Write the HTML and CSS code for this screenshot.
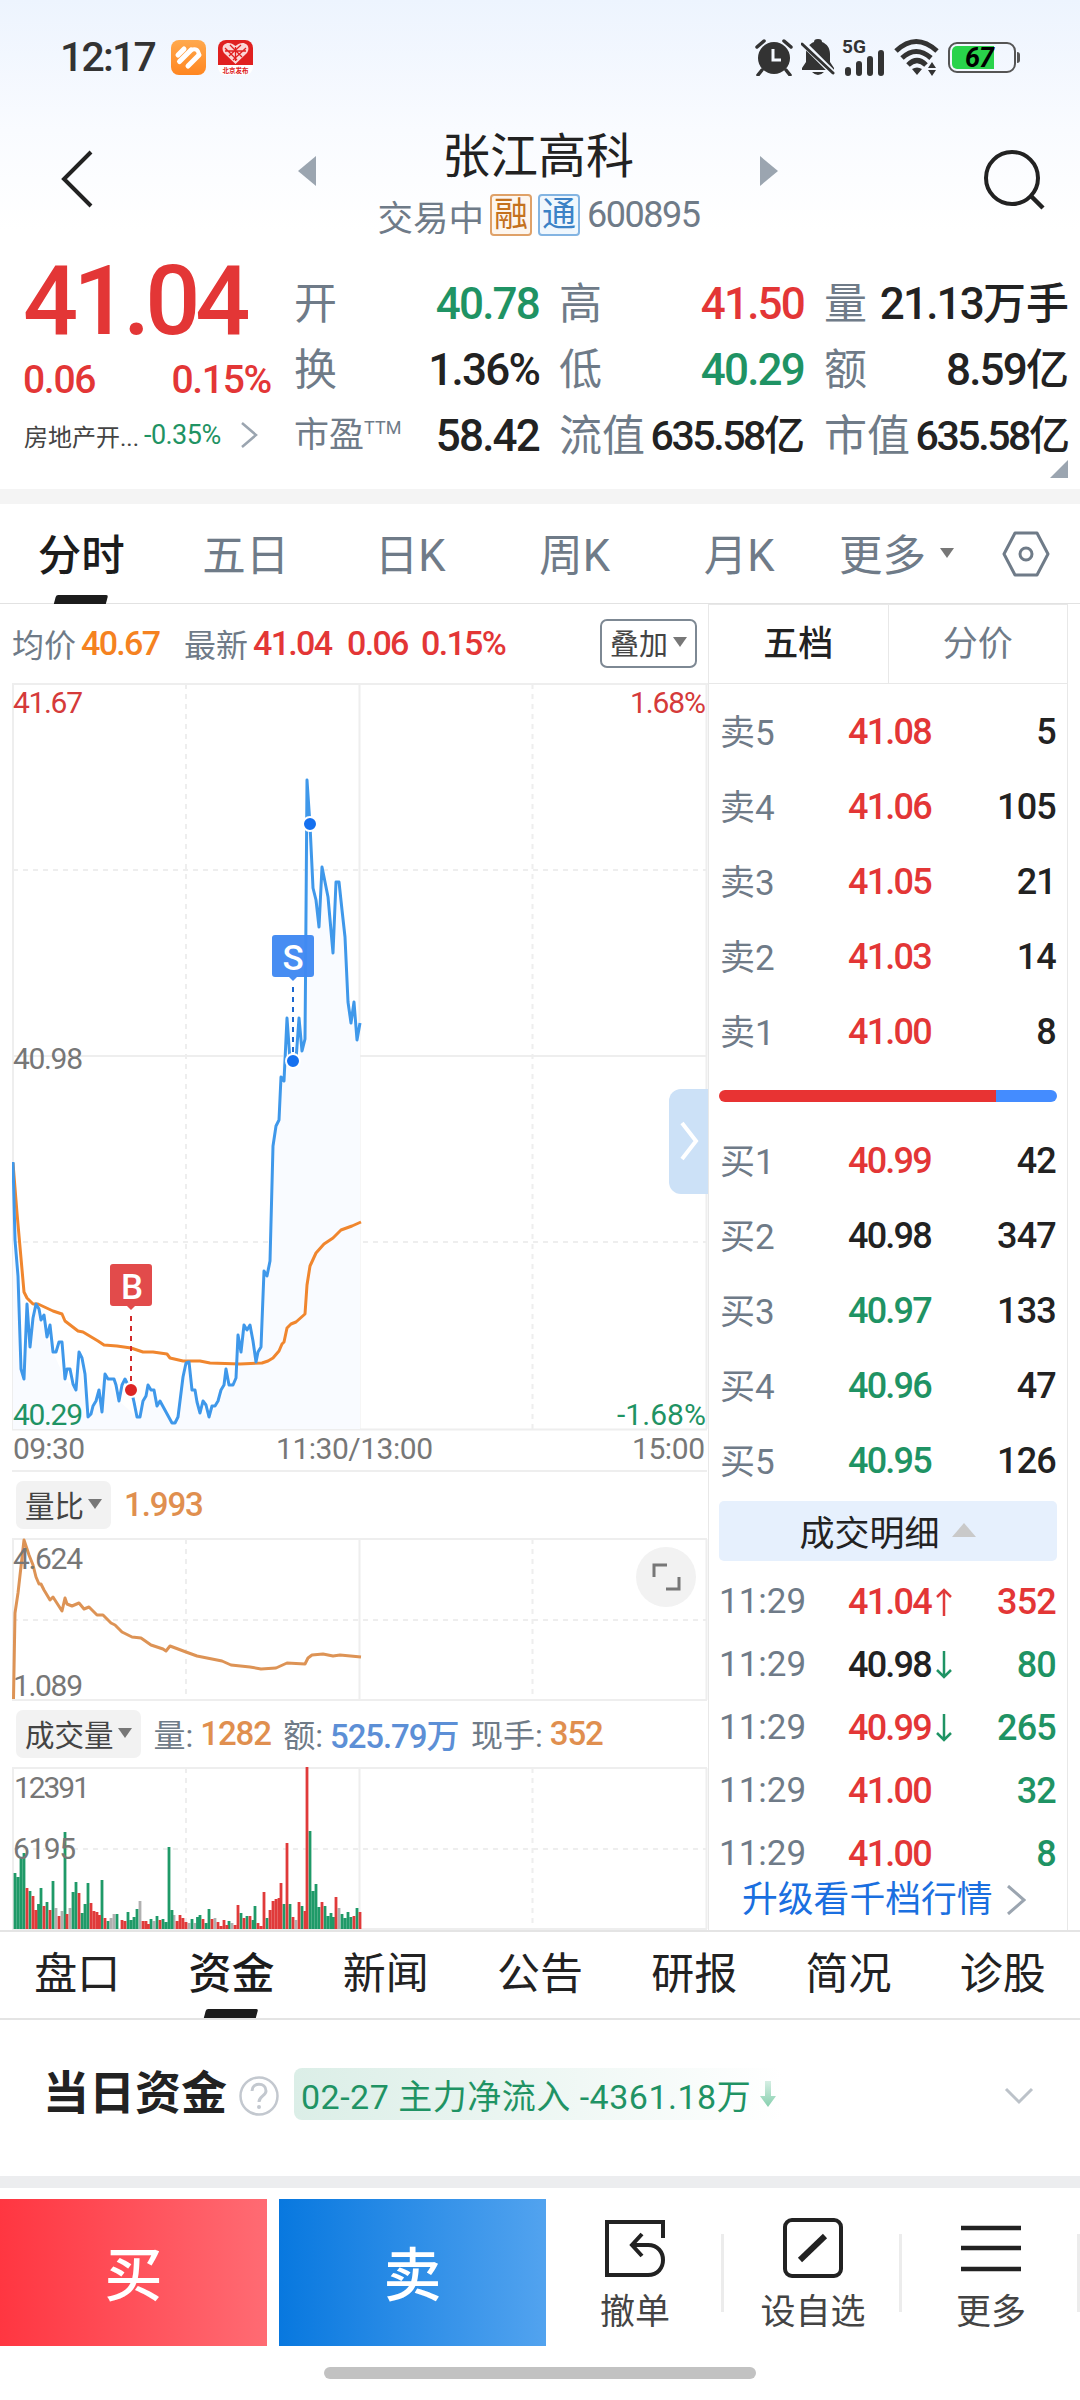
FILE: index.html
```html
<!DOCTYPE html>
<html lang="zh-CN">
<head>
    <meta charset="UTF-8">
    <meta name="viewport" content="width=device-width, initial-scale=1.0">
    <title>张江高科 600895</title>
    <link rel="stylesheet" href="styles.css">
</head>
<body>

<!-- Status bar -->
<div class="status">
    <span class="clock">12:17</span>
    <svg class="app-icon" viewBox="0 0 35 35" width="35" height="35">
        <defs><linearGradient id="og" x1="0" y1="0" x2="0" y2="1"><stop offset="0" stop-color="#ffa94d"/><stop offset="1" stop-color="#ff8620"/></linearGradient></defs>
        <rect width="35" height="35" rx="8" fill="url(#og)"/>
        <path d="M7 15l6-6M8.500 21.500L20 10M17 26L28 15" stroke="#fff" stroke-width="5" stroke-linecap="round"/>
        <path d="M20 10q7-3 8 5" fill="none" stroke="#fff" stroke-width="4"/>
    </svg>
    <svg class="app-icon2" viewBox="0 0 35 35" width="35" height="35">
        <rect width="35" height="35" rx="8" fill="#fff"/>
        <path d="M0 25V8a8 8 0 0 1 8-8h19a8 8 0 0 1 8 8v17z" fill="#e02020"/>
        <path d="M17.500 24L6 13C1 5 10-1 17.500 6 25-1 34 5 29 13z" fill="#fbd6d6"/>
        <path d="M7 8l12 12M12 5l12 12M28 8L15 20M23 5L11 16M17.500 7v14M7 11h21" stroke="#e02020" stroke-width="1.300"/>
        <text x="17.500" y="32.500" font-size="6.500" font-weight="bold" fill="#d22" text-anchor="middle">北京发布</text>
    </svg>
    <div class="status-right">
        <svg width="38" height="38" viewBox="0 0 38 38">
            <circle cx="19" cy="20" r="16" fill="#333"/>
            <path d="M2 9l7-6M36 9l-7-6M7 32l-4 5M31 32l4 5" stroke="#333" stroke-width="3.500" stroke-linecap="round"/>
            <path d="M18 11v11h8" fill="none" stroke="#f5f9ff" stroke-width="3"/>
        </svg>
        <svg width="34" height="38" viewBox="0 0 34 38">
            <path d="M17 1c-3 0-4 1-4 3-5 2-8 6-8 12v8l-4 6v2h32v-2l-4-6v-8c0-6-3-10-8-12 0-2-1-3-4-3zM11 34h12q-6 6-12 0z" fill="#333"/>
            <path d="M1 4l32 32" stroke="#f3f8ff" stroke-width="6"/>
            <path d="M1 6l31 29" stroke="#333" stroke-width="3" stroke-linecap="round"/>
        </svg>
        <svg class="signal" width="44" height="38" viewBox="0 0 44 38">
            <text x="-1" y="15" font-size="19" font-weight="bold" fill="#333">5G</text>
            <path d="M5 32v3M16 26v9M27 21v14M38 15v20" stroke="#333" stroke-width="6" stroke-linecap="round"/>
        </svg>
        <svg class="wifi" width="46" height="38" viewBox="0 0 46 38">
            <g fill="none" stroke="#333" stroke-width="5"><path d="M2 13q20-19 41 0M8 20q14-13 29 0M14 27q9-9 18 0"/></g>
            <path d="M18 31q5-3 10 0l-5 6z M34 30l4-6 4 6zM34 32h8l-4 6z" fill="#333"/>
        </svg>
        <div class="battery"><i></i><b>67</b></div>
    </div>
</div>

<!-- Title bar -->
<div class="header">
    <svg width="34" height="60" viewBox="0 0 34 60"><path d="M31 3L4 30l27 27" fill="none" stroke="#222" stroke-width="4"/></svg>
    <div class="title-block">
        <div class="title-line">
            <svg width="18" height="30" viewBox="0 0 18 30"><path d="M18 0v30L0 15z" fill="#9ba5b0"/></svg>
            <h1>张江高科</h1>
            <svg width="18" height="30" viewBox="0 0 18 30"><path d="M0 0v30l18-15z" fill="#9ba5b0"/></svg>
        </div>
        <div class="subtitle">
            <span>交易中</span><em class="tag orange">融</em><em class="tag blue">通</em><span class="code">600895</span>
        </div>
    </div>
    <svg width="64" height="62" viewBox="0 0 64 62"><circle cx="30" cy="29" r="26" fill="none" stroke="#222" stroke-width="4"/><path d="M48 46l13 13" stroke="#222" stroke-width="4.500"/></svg>
</div>

<!-- Quote summary -->
<div class="quote">
    <div class="price-col">
        <div class="price red">41.04</div>
        <div class="change red"><span>0.06</span><span>0.15%</span></div>
        <div class="sector"><span>房地产开...</span><span class="green num">-0.35%</span>
            <svg width="20" height="26" viewBox="0 0 20 26"><path d="M3 1l14 12L3 25" fill="none" stroke="#9ba5b0" stroke-width="2.500"/></svg>
        </div>
    </div>
    <div class="stats">
        <div class="stat"><label>开</label><b class="green">40.78</b></div>
        <div class="stat"><label>高</label><b class="red">41.50</b></div>
        <div class="stat"><label>量</label><b>21.13<u>万手</u></b></div>
        <div class="stat"><label>换</label><b>1.36%</b></div>
        <div class="stat"><label>低</label><b class="green">40.29</b></div>
        <div class="stat"><label>额</label><b>8.59<u>亿</u></b></div>
        <div class="stat"><label class="small">市盈<sup>TTM</sup></label><b>58.42</b></div>
        <div class="stat"><label>流值</label><b class="long">635.58<u>亿</u></b></div>
        <div class="stat"><label>市值</label><b class="long">635.58<u>亿</u></b></div>
    </div>
    <i class="corner"></i>
</div>

<!-- Period tabs -->
<div class="tabs">
    <span class="active">分时</span>
    <span>五日</span>
    <span>日K</span>
    <span>周K</span>
    <span>月K</span>
    <span class="more">更多<i class="tri"></i></span>
    <svg width="50" height="50" viewBox="0 0 50 50" fill="none" stroke="#6f7b88" stroke-width="3"><path d="M14 4h22l11 21-11 21H14L3 25z" stroke-linejoin="round"/><circle cx="25" cy="25" r="6"/></svg>
</div>

<div class="main">
    <!-- Charts -->
    <div class="charts">
        <div class="chart-head">
            <span>均价</span><b class="amber w1">40.67</b>
            <span>最新</span><b class="red w1">41.04</b><b class="red w2">0.06</b><b class="red w3">0.15%</b>
            <button class="overlay">叠加<i class="tri"></i></button>
        </div>
        <svg class="chart" viewBox="12 683 697 789" width="697" height="789">
            <g class="grid">
                <path d="M12 684H708M13 684V1429M359.500 684V1429M706.500 684V1429M12 1056H707M12 1429.500H707M12 1471H707"/>
                <path class="dash" d="M13 870H707M13 1242H707M186 684V1429M532.500 684V1429"/>
            </g>
            <path class="area" d="M13 1429V1162L15 1240 18 1276 21 1369 24 1379 27 1304 30 1347 33 1318 36 1304 47 1337 53 1352 65 1379 76 1390 79 1352 88 1417 105 1374 119 1401 137 1417 148 1385 172 1423 178 1417 186 1363 200 1413 209 1417 229 1385 236 1378 238 1335 244 1325 256 1362 261 1347 264 1271 270 1261 273 1146 279 1120 281 1077 287 1018 290 1060 299 1018 305 1039 307 779 313 888 319 927 322 867 333 953 339 882 345 937 351 1023 360 1023V1429z"/>
            <polyline class="avg" points="13,1163 17,1213 24,1292 27,1298 33,1304 38,1304 53,1311 62,1314 65,1321 78,1331 83,1332 98,1341 104,1345 117,1346 131,1348 143,1352 153,1352 167,1354 170,1358 183,1361 200,1361 210,1363 240,1364 262,1363 268,1361 273,1358 279,1351 282,1344 284,1342 287,1328 291,1324 296,1322 305,1314 307,1285 310,1266 316,1253 324,1244 333,1238 341,1230 352,1226 361,1222"/>
            <polyline class="line" points="13,1162 15,1240 18,1276 21,1369 24,1379 27,1304 30,1347 33,1318 36,1304 39,1309 41,1320 44,1315 47,1337 50,1325 53,1352 56,1352 59,1342 62,1342 65,1379 67,1369 70,1369 73,1384 76,1390 79,1352 82,1358 85,1374 88,1417 91,1414 93,1406 96,1401 99,1390 102,1412 105,1374 108,1379 114,1379 116,1385 119,1401 122,1385 125,1379 127,1383 131,1389 134,1402 137,1417 140,1417 143,1401 146,1396 148,1385 151,1390 154,1390 157,1406 160,1401 172,1423 175,1423 178,1417 183,1377 186,1363 189,1362 192,1390 195,1390 197,1402 200,1413 203,1401 206,1405 209,1417 212,1406 215,1406 218,1401 221,1390 224,1385 226,1369 229,1385 233,1385 236,1378 238,1335 241,1352 244,1325 247,1330 250,1325 253,1341 256,1362 258,1352 261,1347 264,1271 267,1276 270,1261 273,1146 276,1126 279,1120 281,1077 284,1081 287,1018 290,1060 293,1061 296,1060 299,1018 302,1051 305,1039 305.500,980 307,780 310,825 313,888 316,900 319,927 322,867 328,897 333,953 336,882 339,882 342,910 345,937 348,1002 351,1023 354,1002 357,1040 360,1023"/>
            <path d="M131 1316V1382" stroke="#d22a2a" stroke-width="2" stroke-dasharray="5 5"/>
            <path d="M113 1264h36a3 3 0 0 1 3 3v36a3 3 0 0 1-3 3h-14l-4 4-4-4h-14a3 3 0 0 1-3-3v-36a3 3 0 0 1 3-3z" fill="#e24b4b"/>
            <text x="132" y="1299" class="mark">B</text>
            <circle cx="131" cy="1390" r="7" fill="#dc2525" stroke="#fff" stroke-width="2"/>
            <path d="M293 987V1052" stroke="#1c68cf" stroke-width="2" stroke-dasharray="5 5"/>
            <path d="M275 935h36a3 3 0 0 1 3 3v36a3 3 0 0 1-3 3h-14l-4 4-4-4h-14a3 3 0 0 1-3-3v-36a3 3 0 0 1 3-3z" fill="#4189f2" fill-opacity=".97"/>
            <text x="293" y="970" class="mark">S</text>
            <circle cx="293" cy="1061" r="7" fill="#1570ef" stroke="#fff" stroke-width="2"/>
            <circle cx="310" cy="824" r="7" fill="#1570ef" stroke="#fff" stroke-width="2"/>
            <text class="ax r" x="13" y="713" textLength="70">41.67</text>
            <text class="ax r" x="630" y="713" textLength="76">1.68%</text>
            <text class="ax" x="13" y="1069" textLength="70">40.98</text>
            <text class="ax g" x="13" y="1425" textLength="70">40.29</text>
            <text class="ax g" x="617" y="1425" textLength="89">-1.68%</text>
            <text class="ax" x="13" y="1459" textLength="72">09:30</text>
            <text class="ax" x="276" y="1459" textLength="157">11:30/13:00</text>
            <text class="ax" x="632" y="1459" textLength="73">15:00</text>
            <path d="M708 1089h-27a12 12 0 0 0-12 12v81a12 12 0 0 0 12 12h27z" fill="#cce1f7"/>
            <path d="M682 1123l14 18-14 18" fill="none" stroke="#fff" stroke-width="4"/>
        </svg>
        <div class="sub-head"><span class="pill">量比<i class="tri"></i></span><b class="tan">1.993</b></div>
        <svg class="chart" viewBox="12 1538 697 164" width="697" height="164">
            <g class="grid">
                <path d="M12 1539H707M13 1539V1700M359.500 1539V1700M706.500 1539V1700M12 1700H707"/>
                <path class="dash" d="M13 1620H707M186 1539V1700M532.500 1539V1700"/>
            </g>
            <polyline class="ratio" points="13.500,1699 15,1613 18,1593 24,1540 29,1555 33,1565 36,1577 39,1584 41,1584 44,1590 50,1600 53,1597 62,1611 65,1598 67,1604 72,1606 79,1603 84,1609 89,1607 97,1615 103,1615 111,1623 115,1625 122,1632 132,1637 141,1638 151,1645 163,1649 166,1651 170,1646 186,1652 197,1656 222,1661 231,1665 250,1667 261,1669 276,1668 287,1663 305,1664 308,1658 312,1655 323,1654 333,1656 340,1655 361,1657"/>
            <text class="ax" x="13" y="1569" textLength="70">4.624</text>
            <text class="ax" x="13" y="1696" textLength="70">1.089</text>
            <circle cx="666" cy="1577" r="30" fill="#f2f2f2"/>
            <path d="M654 1577v-12h13M679 1577v12h-13" fill="none" stroke="#777" stroke-width="3"/>
        </svg>
        <div class="sub-head vol-head"><span class="pill">成交量<i class="tri"></i></span>
            <span>量:</span><b class="tan v1">1282</b><span>额:</span><b class="sky v2">525.79<u>万</u></b><span>现手:</span><b class="tan">352</b>
        </div>
        <svg class="chart" viewBox="12 1767 697 163" width="697" height="163">
            <g class="grid">
                <path d="M12 1768H707M13 1768V1929M359.500 1768V1929M706.500 1768V1929M12 1929H707"/>
                <path class="dash" d="M13 1849H707M186 1768V1929M532.500 1768V1929"/>
            </g>
            <g class="bars">
                <path stroke="#b0b0b0" d="M56 1908V1929M62 1911V1929M70 1908V1929M111 1918V1929M114 1914V1929M140 1901V1929M154 1921V1929M174 1915V1929M189 1923V1929M195 1923V1929M215 1918V1929M232 1923V1929M296 1920V1929M339 1908V1929"/>
                <path stroke="#1f9a68" d="M15 1873V1929M18 1877V1929M21 1857V1929M24 1853V1929M30 1891V1929M38.500 1904V1929M41 1888V1929M47 1902V1929M53 1881V1929M65 1832V1929M73 1892V1929M76 1882V1929M82 1913V1929M85 1904V1929M88 1883V1929M102 1880V1929M108 1921V1929M117 1914V1929M128 1912V1929M131 1920V1929M134 1917V1929M137 1909V1929M151 1919V1929M157 1916V1929M163 1919V1929M166 1922V1929M169 1847V1929M172 1910V1929M192 1919V1929M197.500 1917V1929M200 1915V1929M206 1923V1929M209 1909V1929M229 1921V1929M241 1913V1929M247 1916V1929M253 1920V1929M255 1906V1929M267 1918V1929M284 1904V1929M290 1904V1929M302 1906V1929M310 1831V1929M313 1891V1929M316 1884V1929M319 1907V1929M325 1906V1929M328 1916V1929M331 1913V1929M333.500 1917V1929M342 1914V1929M345 1918V1929M348 1912V1929M351 1917V1929M357 1908V1929"/>
                <path stroke="#e03a3a" d="M27 1888V1929M33 1896V1929M36 1910V1929M44 1906V1929M50 1910V1929M59 1916V1929M67 1914V1929M79 1893V1929M91 1903V1929M94 1911V1929M97 1912V1929M99.500 1915V1929M105 1918V1929M122 1920V1929M125 1921V1929M143 1921V1929M146 1921V1929M148.500 1924V1929M160 1920V1929M177 1921V1929M180 1915V1929M183 1918V1929M186 1922V1929M203 1919V1929M212 1919V1929M218 1922V1929M221 1926V1929M224 1920V1929M227 1925V1929M235 1925V1929M238 1905V1929M244 1918V1929M250 1916V1929M258 1923V1929M261 1926V1929M264 1892V1929M270 1910V1929M273 1901V1929M276 1899V1929M279 1898V1929M281 1883V1929M287 1843V1929M293 1917V1929M299 1902V1929M305 1911V1929M307 1767V1929M322 1902V1929M336 1897V1929M354 1916V1929M360 1912V1929"/>
            </g>
            <text class="ax" x="14" y="1798" textLength="76">12391</text>
            <text class="ax" x="13" y="1859" textLength="63">6195</text>
        </svg>
    </div>

    <!-- Order book -->
    <div class="book">
        <div class="book-tabs"><span class="active">五档</span><span>分价</span></div>
        <div class="levels">
            <div class="row"><span>卖5</span><b class="red">41.08</b><b class="v">5</b></div>
            <div class="row"><span>卖4</span><b class="red">41.06</b><b class="v">105</b></div>
            <div class="row"><span>卖3</span><b class="red">41.05</b><b class="v">21</b></div>
            <div class="row"><span>卖2</span><b class="red">41.03</b><b class="v">14</b></div>
            <div class="row"><span>卖1</span><b class="red">41.00</b><b class="v">8</b></div>
        </div>
        <div class="ratio-bar"></div>
        <div class="levels buy">
            <div class="row"><span>买1</span><b class="red">40.99</b><b class="v">42</b></div>
            <div class="row"><span>买2</span><b>40.98</b><b class="v">347</b></div>
            <div class="row"><span>买3</span><b class="green">40.97</b><b class="v">133</b></div>
            <div class="row"><span>买4</span><b class="green">40.96</b><b class="v">47</b></div>
            <div class="row"><span>买5</span><b class="green">40.95</b><b class="v">126</b></div>
        </div>
        <div class="deal-title">成交明细<i></i></div>
        <div class="deals">
            <div class="row"><span>11:29</span><b class="red">41.04<svg width="16" height="28" viewBox="0 0 16 28"><path d="M8 28V2M1 9l7-7 7 7" fill="none" stroke="#e03a3a" stroke-width="2.500"/></svg></b><b class="v red">352</b></div>
            <div class="row"><span>11:29</span><b>40.98<svg width="16" height="28" viewBox="0 0 16 28"><path d="M8 0v26M1 19l7 7 7-7" fill="none" stroke="#1f9364" stroke-width="2.500"/></svg></b><b class="v green">80</b></div>
            <div class="row"><span>11:29</span><b class="red">40.99<svg width="16" height="28" viewBox="0 0 16 28"><path d="M8 0v26M1 19l7 7 7-7" fill="none" stroke="#1f9364" stroke-width="2.500"/></svg></b><b class="v green">265</b></div>
            <div class="row"><span>11:29</span><b class="red">41.00</b><b class="v green">32</b></div>
            <div class="row"><span>11:29</span><b class="red">41.00</b><b class="v green">8</b></div>
        </div>
        <div class="upgrade">升级看千档行情<svg width="20" height="30" viewBox="0 0 20 30"><path d="M2 1l16 14L2 29" fill="none" stroke="#9ba5b0" stroke-width="3"/></svg></div>
    </div>
</div>

<!-- Info tabs -->
<div class="info-tabs">
    <span>盘口</span>
    <span class="active">资金</span>
    <span>新闻</span>
    <span>公告</span>
    <span>研报</span>
    <span>简况</span>
    <span>诊股</span>
</div>

<div class="funds">
    <h2>当日资金</h2>
    <svg class="help" width="42" height="42" viewBox="0 0 42 42" fill="none" stroke="#c3c8cf" stroke-width="2.500"><circle cx="21" cy="21" r="18.500"/><path d="M14 16c0-9 14-9 14 0 0 5-7 5-7 11" stroke-width="3"/><circle cx="21" cy="32" r="1" stroke-width="2"/></svg>
    <div class="flow">02-27 主力净流入 -4361.18万<svg width="16" height="26" viewBox="0 0 16 26"><defs><linearGradient id="gg" x1="0" y1="0" x2="0" y2="1"><stop offset="0" stop-color="#d5eee3"/><stop offset="1" stop-color="#86cfae"/></linearGradient></defs><path d="M5 0h6v15h5l-8 11-8-11h5z" fill="url(#gg)"/></svg></div>
    <svg class="down" width="30" height="18" viewBox="0 0 30 18"><path d="M2 2l13 13L28 2" fill="none" stroke="#bcc2c9" stroke-width="3"/></svg>
</div>

<!-- Trade bar -->
<div class="actions">
    <button class="buy-btn">买</button>
    <button class="sell-btn">卖</button>
    <div class="action">
        <svg width="62" height="62" viewBox="0 0 62 62" fill="none" stroke="#222" stroke-width="4"><path d="M59 21V5H3v53h41c20 0 20-30 0-30H29M38 17L28 28l10 11"/></svg>
        <span>撤单</span>
    </div>
    <div class="action">
        <svg width="62" height="62" viewBox="0 0 62 62" fill="none" stroke="#222"><rect x="3" y="3" width="56" height="56" rx="7" stroke-width="4"/><path d="M18 43L43 19" stroke-width="6"/></svg>
        <span>设自选</span>
    </div>
    <div class="action">
        <svg width="62" height="62" viewBox="0 0 62 62" stroke="#222" stroke-width="4.500"><path d="M1 11h60M1 31h60M1 52h60"/></svg>
        <span>更多</span>
    </div>
</div>
<div class="home-bar"></div>

</body>
</html>
```
FILE: styles.css
```css
* {
    box-sizing: border-box;
}
body {
    margin: 0;
    width: 1080px;
    height: 2400px;
    overflow: hidden;
    font-family: Roboto, "Noto Sans CJK SC", sans-serif;
    color: #222;
    background: linear-gradient(#edf4fe 0, #f9fbff 130px, #fff 230px);
}
svg {
    display: block;
    flex: none;
}
h1, h2 {
    margin: 0;
}
b {
    font-weight: 500;
    letter-spacing: -0.04em;
}
u {
    text-decoration: none;
    letter-spacing: 0;
}
button {
    font-family: inherit;
    padding: 0;
    border: none;
}
.red { color: #e33636; }
.green { color: #1f9364; }
.amber { color: #f58220; }
.tan { color: #e08f4f; }
.sky { color: #5c8fd6; }
.num { letter-spacing: -0.02em; }
.tri {
    border: 7px solid transparent;
    border-top: 10px solid #777;
    border-bottom: 0;
}

/* Status bar */
.status {
    display: flex;
    align-items: center;
    height: 114px;
    padding-left: 60px;
}
.clock {
    width: 111px;
    font-size: 41px;
    font-weight: 500;
    letter-spacing: -1.8px;
    color: #333;
}
.app-icon {
    margin-right: 12px;
}
.status-right {
    display: flex;
    align-items: center;
    margin-left: auto;
    margin-right: 64px;
}
.status-right svg {
    margin-right: 8px;
}
.status-right .signal {
    margin-right: 7px;
    overflow: visible;
}
.battery {
    position: relative;
    width: 68px;
    height: 31px;
    border: 2px solid #555;
    border-radius: 9px;
    padding: 2px;
}
.battery::after {
    content: "";
    position: absolute;
    right: -6px;
    top: 8px;
    width: 3px;
    height: 11px;
    background: #555;
    border-radius: 0 3px 3px 0;
}
.battery i {
    display: block;
    width: 42px;
    height: 23px;
    background: #29d34b;
    border-radius: 5px 0 0 5px;
}
.battery b {
    position: absolute;
    left: 15px;
    top: 0;
    font-size: 27px;
    font-weight: 700;
    font-style: italic;
    line-height: 28px;
    color: #000;
}

/* Title bar */
.header {
    display: flex;
    justify-content: space-between;
    height: 146px;
    padding: 10px 34px 0 60px;
}
.header > svg {
    margin-top: 25px;
}
.title-block {
    width: 480px;
}
.title-line {
    display: flex;
    justify-content: space-between;
    align-items: center;
    height: 66px;
}
.title-line svg {
    margin-top: 32px;
    align-self: flex-start;
}
h1 {
    font-size: 48px;
    font-weight: 400;
    line-height: 62px;
}
.subtitle {
    display: flex;
    justify-content: center;
    align-items: center;
    height: 50px;
    padding-left: 1px;
    font-size: 35.5px;
    color: #6f7b88;
}
.tag {
    width: 42px;
    height: 42px;
    margin-left: 6px;
    border: 2px solid;
    border-radius: 4px;
    font-size: 34px;
    line-height: 36px;
    font-style: normal;
    text-align: center;
}
.tag.orange {
    color: #c4711d;
    border-color: #dfa168;
    background: #fdf6ef;
}
.tag.blue {
    color: #3c82c6;
    border-color: #83b4e2;
    background: #f0f7fd;
}
.code {
    font-size: 36px;
    letter-spacing: -1.5px;
    margin-left: 7px;
}

/* Quote summary */
.quote {
    position: relative;
    display: flex;
    height: 244px;
    padding: 10px 12px 0 24px;
    border-bottom: 15px solid #f4f4f4;
}
.price-col {
    width: 247px;
    margin-right: 23px;
}
.price {
    height: 62px;
    font-size: 97px;
    font-weight: 500;
    line-height: 63px;
    letter-spacing: -5px;
    margin-left: -1px;
}
.change {
    display: flex;
    justify-content: space-between;
    height: 76px;
    font-size: 39px;
    font-weight: 500;
    line-height: 96px;
    letter-spacing: -1.3px;
    margin-left: -1px;
}
.sector {
    display: flex;
    align-items: center;
    height: 54px;
    font-size: 24px;
    color: #444;
}
.sector .num {
    font-size: 27px;
    margin: 0 18px 0 5px;
}
.stats {
    flex: 1;
    display: grid;
    grid-template-columns: repeat(3, 244px);
    grid-template-rows: repeat(3, 66px);
    column-gap: 21px;
    padding-top: 1px;
}
.stat {
    display: flex;
    justify-content: space-between;
    align-items: center;
    font-size: 43px;
    line-height: 66px;
    white-space: nowrap;
}
.stat label {
    color: #6f7b88;
}
.stat label.small {
    font-size: 35px;
}
.stat sup {
    font-size: 18px;
    line-height: 10px;
    vertical-align: 13px;
}
.stat b {
    font-size: 44px;
    letter-spacing: -1.8px;
    margin-right: -1px;
}
.stat u {
    font-size: 43px;
    letter-spacing: 0;
}
.stat .long {
    font-size: 41px;
    letter-spacing: -2.4px;
    margin-right: -2px;
}
.stat .long u {
    font-size: 41px;
}
.corner {
    position: absolute;
    right: 12px;
    bottom: 11px;
    border-left: 18px solid transparent;
    border-bottom: 18px solid #9ba5b0;
}

/* Period tabs */
.tabs {
    display: flex;
    align-items: center;
    height: 100px;
    border-bottom: 1px solid #e2e2e2;
    font-size: 43.5px;
    color: #6f7b88;
}
.tabs span {
    position: relative;
    width: 164.5px;
    line-height: 97px;
    text-align: center;
    padding-top: 5px;
    left: -1px;
}
.tabs .more {
    display: flex;
    align-items: center;
    justify-content: center;
    width: 170px;
    gap: 14px;
    margin-left: -10px;
    margin-right: 18px;
}
.tabs .more .tri { margin-top: -6px; }
.tabs .active, .info-tabs .active {
    color: #1c1c1c;
    font-weight: 500;
}
.tabs .active::after, .info-tabs .active::after {
    content: "";
    position: absolute;
    left: calc(50% - 26px);
    bottom: 0;
    width: 52px;
    height: 9px;
    background: #1c1c1c;
    transform: skewX(-15deg);
    border-radius: 2px 2px 0 0;
}
.tabs .active::after {
    bottom: 1px;
}

/* Charts */
.main {
    display: flex;
    height: 1328px;
    padding-left: 12px;
    border-bottom: 2px solid #e4e4e4;
    overflow: hidden;
}
.charts {
    width: 696px;
    flex: none;
}
.chart-head {
    display: flex;
    align-items: center;
    height: 79px;
    font-size: 32px;
    color: #6f7b88;
    padding-bottom: 1px;
}
.chart-head b {
    font-size: 34px;
    letter-spacing: -1.7px;
    margin-left: 5px;
}
.chart-head .w1 { width: 103px; }
.chart-head .red.w1 { width: 89px; }
.chart-head .w2 { width: 69px; }
.overlay {
    display: flex;
    align-items: center;
    justify-content: center;
    gap: 5px;
    width: 97px;
    height: 49px;
    margin-left: auto;
    margin-right: 11px;
    padding-bottom: 2px;
    font-size: 29px;
    color: #444;
    background: #fff;
    border: 2px solid #7d8893;
    border-radius: 7px;
}
.grid {
    fill: none;
    stroke: #eee;
    stroke-width: 2;
}
.grid .dash {
    stroke-dasharray: 5 5;
}
.area { fill: #f9fbff; }
.avg, .line, .ratio {
    fill: none;
    stroke-width: 3;
    stroke-linejoin: round;
}
.avg { stroke: #f0862e; }
.line { stroke: #3f98ea; }
.ratio { stroke: #dd9355; }
.bars { stroke-width: 2.8; }
.ax {
    font-size: 30px;
    fill: #777;
}
.ax.r { fill: #d53a3a; }
.ax.g { fill: #1f9364; }
.mark {
    font-size: 35px;
    font-weight: 500;
    fill: #fff;
    text-anchor: middle;
}
.sub-head {
    display: flex;
    align-items: center;
    height: 66px;
    padding-left: 4px;
    padding-bottom: 1px;
    font-size: 32px;
    color: #6f7b88;
    white-space: nowrap;
}
.pill {
    display: flex;
    align-items: center;
    gap: 4px;
    height: 48px;
    padding: 0 9px 2px;
    margin-right: 13px;
    background: #f2f2f2;
    border-radius: 7px;
    font-size: 29.5px;
    color: #444;
}
.sub-head b {
    font-size: 33px;
    letter-spacing: -1.1px;
}
.vol-head {
    height: 65px;
    padding-bottom: 2px;
}
.vol-head span:not(.pill) {
    margin-right: 7px;
    padding-bottom: 2px;
}
.vol-head .v1 { width: 83px; }
.vol-head .v2 { width: 141px; }

/* Order book */
.book {
    width: 360px;
    border: 1px solid #e8e8e8;
    border-bottom: none;
    font-size: 35px;
}
.book-tabs {
    display: flex;
    height: 79px;
    border-bottom: 1px solid #e8e8e8;
}
.book-tabs span {
    flex: 1;
    line-height: 80px;
    text-align: center;
    color: #6f7b88;
}
.book-tabs .active {
    color: #222;
    font-weight: 500;
    border-right: 1px solid #e8e8e8;
}
.levels {
    padding-top: 10px;
}
.row {
    display: flex;
    align-items: center;
    height: 75px;
    padding: 0 11px 0 11px;
}
.row span {
    width: 128px;
    color: #6f7b88;
}
.levels .row span {
    padding-bottom: 5px;
}
.row b {
    display: flex;
    align-items: center;
    font-size: 36px;
    letter-spacing: -1.8px;
}
.row b svg { margin-left: 5px; }
.row .v {
    margin-left: auto;
    letter-spacing: -0.8px;
}
.ratio-bar {
    height: 12px;
    margin: 21px 10px 20px;
    border-radius: 6px;
    background: linear-gradient(90deg, #e83333 82%, #448cff 82%);
}
.buy { padding-top: 1px; }
.deal-title {
    display: flex;
    align-items: center;
    justify-content: center;
    gap: 12px;
    height: 60px;
    margin: 3px 10px 9px;
    padding: 0 1px 2px 0;
    background: #e6f0fd;
    border-radius: 5px;
}
.deal-title i {
    border: 12px solid transparent;
    border-bottom: 14px solid #c9c9c9;
    border-top: 0;
}
.deals .row {
    height: 63px;
}
.deals .row span {
    margin-left: -1px;
    margin-right: 1px;
}
.upgrade {
    display: flex;
    align-items: center;
    gap: 13px;
    height: 36px;
    margin-top: -3px;
    padding-left: 33px;
    font-size: 35.8px;
    line-height: 36px;
    color: #1a6fe0;
}

/* Info tabs */
.info-tabs {
    display: grid;
    grid-template-columns: repeat(7, 1fr);
    height: 88px;
    border-bottom: 2px solid #e4e4e4;
    font-size: 43px;
    text-align: center;
}
.info-tabs span {
    position: relative;
    line-height: 84px;
}

/* Fund flow */
.funds {
    display: flex;
    align-items: center;
    height: 168px;
    padding: 0 46px 8px 43px;
    border-bottom: 12px solid #ecedef;
}
.funds h2 {
    font-size: 46px;
    font-weight: 700;
    line-height: 50px;
    padding-bottom: 2px;
}
.help {
    margin: 3px 14px 0 11px;
}
.flow {
    display: flex;
    align-items: center;
    gap: 9px;
    height: 52px;
    padding: 0 7px;
    font-size: 34px;
    letter-spacing: 0.5px;
    white-space: nowrap;
    color: #1f9364;
    border-radius: 8px;
    background: linear-gradient(90deg, #dbeee7, #fff);
}
.down {
    margin-left: auto;
    margin-top: 4px;
}

/* Trade bar */
.actions {
    display: flex;
    height: 160px;
    padding-top: 11px;
}
.buy-btn, .sell-btn {
    width: 267px;
    height: 147px;
    font-size: 58px;
    font-weight: 500;
    color: #fff;
    padding-bottom: 3px;
}
.buy-btn {
    margin-right: 12px;
    background: linear-gradient(90deg, #ff3641, #ff6b73);
}
.sell-btn {
    background: linear-gradient(90deg, #0878df, #52a3ef);
}
.action {
    position: relative;
    display: flex;
    flex-direction: column;
    align-items: center;
    width: 178px;
    padding-top: 18px;
    font-size: 35px;
    color: #444;
}
.action span {
    line-height: 68px;
}
.action::after {
    content: "";
    position: absolute;
    right: 0;
    top: 35px;
    width: 3px;
    height: 78px;
    background: #ececec;
}
.home-bar {
    width: 432px;
    height: 12px;
    margin: 19px auto 0;
    border-radius: 6px;
    background: #c2c2c2;
}
```
